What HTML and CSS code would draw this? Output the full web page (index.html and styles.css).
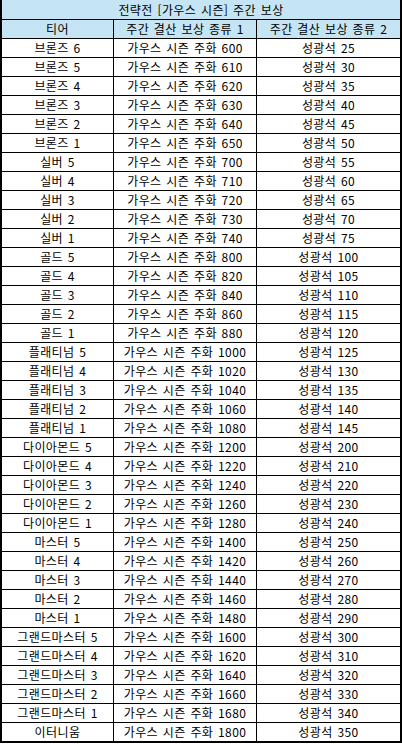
FILE: index.html
```html
<!DOCTYPE html>
<html lang="ko">
<head>
<meta charset="utf-8">
<title>전략전 [가우스 시즌] 주간 보상</title>
<link rel="stylesheet" href="styles.css">
</head>
<body>
<div class="sheet">
<table class="grid">
<colgroup><col class="c1"><col class="c2"><col class="c3"></colgroup>
<thead>
<tr class="title"><th colspan="3">전략전 [가우스 시즌] 주간 보상</th></tr>
<tr class="head"><th>티어</th><th>주간 결산 보상 종류 1</th><th>주간 결산 보상 종류 2</th></tr>
</thead>
<tbody>
<tr><td>브론즈 6</td><td>가우스 시즌 주화 600</td><td>성광석 25</td></tr>
<tr><td>브론즈 5</td><td>가우스 시즌 주화 610</td><td>성광석 30</td></tr>
<tr><td>브론즈 4</td><td>가우스 시즌 주화 620</td><td>성광석 35</td></tr>
<tr><td>브론즈 3</td><td>가우스 시즌 주화 630</td><td>성광석 40</td></tr>
<tr><td>브론즈 2</td><td>가우스 시즌 주화 640</td><td>성광석 45</td></tr>
<tr><td>브론즈 1</td><td>가우스 시즌 주화 650</td><td>성광석 50</td></tr>
<tr><td>실버 5</td><td>가우스 시즌 주화 700</td><td>성광석 55</td></tr>
<tr><td>실버 4</td><td>가우스 시즌 주화 710</td><td>성광석 60</td></tr>
<tr><td>실버 3</td><td>가우스 시즌 주화 720</td><td>성광석 65</td></tr>
<tr><td>실버 2</td><td>가우스 시즌 주화 730</td><td>성광석 70</td></tr>
<tr><td>실버 1</td><td>가우스 시즌 주화 740</td><td>성광석 75</td></tr>
<tr><td>골드 5</td><td>가우스 시즌 주화 800</td><td>성광석 100</td></tr>
<tr><td>골드 4</td><td>가우스 시즌 주화 820</td><td>성광석 105</td></tr>
<tr><td>골드 3</td><td>가우스 시즌 주화 840</td><td>성광석 110</td></tr>
<tr><td>골드 2</td><td>가우스 시즌 주화 860</td><td>성광석 115</td></tr>
<tr><td>골드 1</td><td>가우스 시즌 주화 880</td><td>성광석 120</td></tr>
<tr><td>플래티넘 5</td><td>가우스 시즌 주화 1000</td><td>성광석 125</td></tr>
<tr><td>플래티넘 4</td><td>가우스 시즌 주화 1020</td><td>성광석 130</td></tr>
<tr><td>플래티넘 3</td><td>가우스 시즌 주화 1040</td><td>성광석 135</td></tr>
<tr><td>플래티넘 2</td><td>가우스 시즌 주화 1060</td><td>성광석 140</td></tr>
<tr><td>플래티넘 1</td><td>가우스 시즌 주화 1080</td><td>성광석 145</td></tr>
<tr><td>다이아몬드 5</td><td>가우스 시즌 주화 1200</td><td>성광석 200</td></tr>
<tr><td>다이아몬드 4</td><td>가우스 시즌 주화 1220</td><td>성광석 210</td></tr>
<tr><td>다이아몬드 3</td><td>가우스 시즌 주화 1240</td><td>성광석 220</td></tr>
<tr><td>다이아몬드 2</td><td>가우스 시즌 주화 1260</td><td>성광석 230</td></tr>
<tr><td>다이아몬드 1</td><td>가우스 시즌 주화 1280</td><td>성광석 240</td></tr>
<tr><td>마스터 5</td><td>가우스 시즌 주화 1400</td><td>성광석 250</td></tr>
<tr><td>마스터 4</td><td>가우스 시즌 주화 1420</td><td>성광석 260</td></tr>
<tr><td>마스터 3</td><td>가우스 시즌 주화 1440</td><td>성광석 270</td></tr>
<tr><td>마스터 2</td><td>가우스 시즌 주화 1460</td><td>성광석 280</td></tr>
<tr><td>마스터 1</td><td>가우스 시즌 주화 1480</td><td>성광석 290</td></tr>
<tr><td>그랜드마스터 5</td><td>가우스 시즌 주화 1600</td><td>성광석 300</td></tr>
<tr><td>그랜드마스터 4</td><td>가우스 시즌 주화 1620</td><td>성광석 310</td></tr>
<tr><td>그랜드마스터 3</td><td>가우스 시즌 주화 1640</td><td>성광석 320</td></tr>
<tr><td>그랜드마스터 2</td><td>가우스 시즌 주화 1660</td><td>성광석 330</td></tr>
<tr><td>그랜드마스터 1</td><td>가우스 시즌 주화 1680</td><td>성광석 340</td></tr>
<tr class="last"><td>이터니움</td><td>가우스 시즌 주화 1800</td><td>성광석 350</td></tr>
</tbody>
</table>
</div>
</body>
</html>
```
FILE: styles.css
```css
html, body {
  margin: 0;
  padding: 0;
  background: #ffffff;
}
.sheet {
  width: 398px;
  border-left: 2px solid #000;
  border-right: 2px solid #000;
  border-bottom: 2px solid #000;
}
.grid {
  width: 398px;
  table-layout: fixed;
  border-collapse: separate;
  border-spacing: 0;
  font-family: "Noto Sans CJK KR", "Noto Sans", sans-serif;
  font-size: 12px;
  letter-spacing: 0.4px;
  word-spacing: 1px;
  color: #000;
}
.c1 { width: 112px; }
.c2 { width: 143px; }
.c3 { width: 143px; }
.grid th,
.grid td {
  height: 18px;
  padding: 0;
  text-align: center;
  vertical-align: middle;
  font-weight: normal;
  line-height: 18px;
  white-space: nowrap;
  border-bottom: 1px solid #000;
  border-right: 1px solid #000;
}
.grid th:last-child,
.grid td:last-child {
  border-right: 0;
}
.title th {
  height: 19px;
  background: #c5e5f4;
}
.head th {
  background: #c5e5f4;
}
.last td {
  border-bottom: 0;
}
```
